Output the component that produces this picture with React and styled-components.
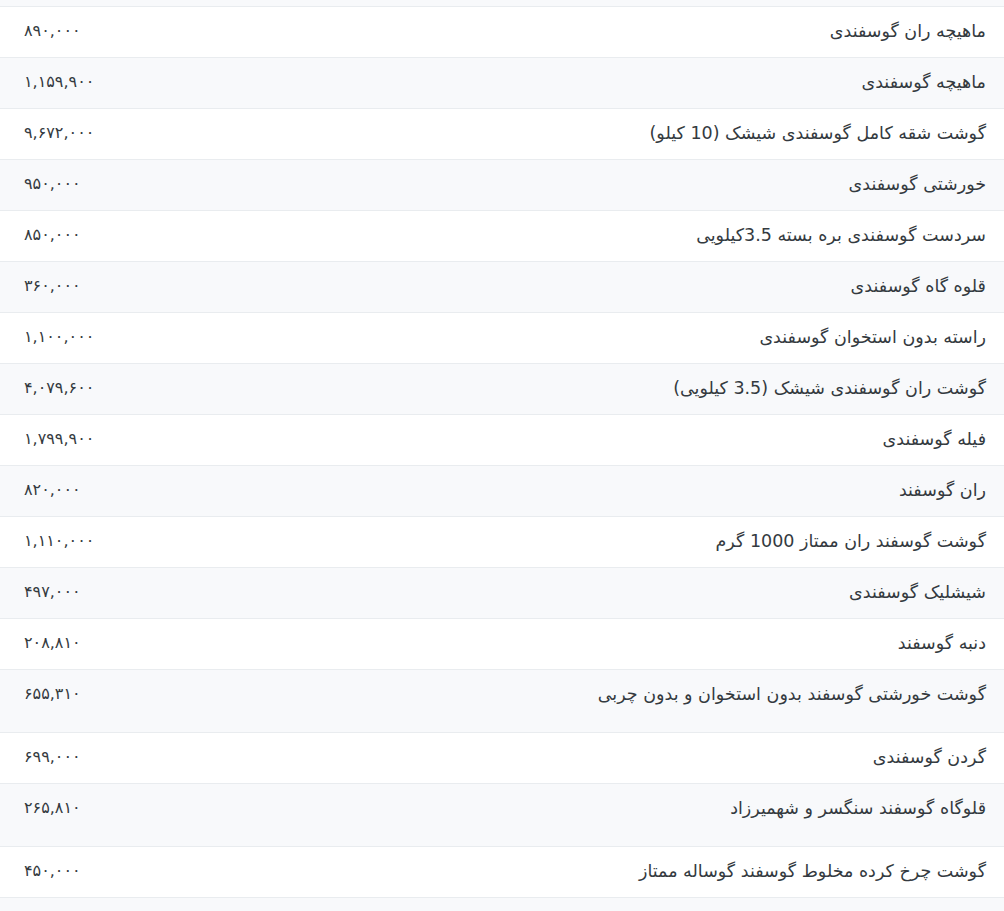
import React from "react";
import styled, { createGlobalStyle } from "styled-components";

const GlobalStyle = createGlobalStyle`
  html, body {
    margin: 0;
    padding: 0;
    background: #ffffff;
  }
  body {
    font-family: "DejaVu Sans", "Noto Sans", sans-serif;
    color: #343a40;
    overflow: hidden;
  }
`;

const Table = styled.div`
  direction: rtl;
  width: 100%;
  margin-top: -44px;
`;

const Row = styled.div`
  display: grid;
  grid-template-columns: 1fr auto;
  align-items: start;
  height: ${(p) => (p.$tall ? 62 : 50)}px;
  border-bottom: 1px solid #e9ecef;
  background: ${(p) => (p.$striped ? "#f8f9fb" : "#ffffff")};
`;

const Name = styled.div`
  padding: 11px 18px 0 0;
  font-size: 17.5px;
  line-height: 26px;
  text-align: right;
  white-space: nowrap;
`;

const Price = styled.div`
  direction: ltr;
  padding: 11px 0 0 24px;
  width: 180px;
  font-size: 16px;
  line-height: 26px;
  text-align: left;
`;

const rows = [
  { name: "", price: "" },
  { name: "ماهیچه ران گوسفندی", price: "۸۹۰,۰۰۰" },
  { name: "ماهیچه گوسفندی", price: "۱,۱۵۹,۹۰۰" },
  { name: "گوشت شقه کامل گوسفندی شیشک (10 کیلو)", price: "۹,۶۷۲,۰۰۰" },
  { name: "خورشتی گوسفندی", price: "۹۵۰,۰۰۰" },
  { name: "سردست گوسفندی بره بسته 3.5کیلویی", price: "۸۵۰,۰۰۰" },
  { name: "قلوه گاه گوسفندی", price: "۳۶۰,۰۰۰" },
  { name: "راسته بدون استخوان گوسفندی", price: "۱,۱۰۰,۰۰۰" },
  { name: "گوشت ران گوسفندی شیشک (3.5 کیلویی)", price: "۴,۰۷۹,۶۰۰" },
  { name: "فیله گوسفندی", price: "۱,۷۹۹,۹۰۰" },
  { name: "ران گوسفند", price: "۸۲۰,۰۰۰" },
  { name: "گوشت گوسفند ران ممتاز 1000 گرم", price: "۱,۱۱۰,۰۰۰" },
  { name: "شیشلیک گوسفندی", price: "۴۹۷,۰۰۰" },
  { name: "دنبه گوسفند", price: "۲۰۸,۸۱۰" },
  { name: "گوشت خورشتی گوسفند بدون استخوان و بدون چربی", price: "۶۵۵,۳۱۰", tall: true },
  { name: "گردن گوسفندی", price: "۶۹۹,۰۰۰" },
  { name: "قلوگاه گوسفند سنگسر و شهمیرزاد", price: "۲۶۵,۸۱۰", tall: true },
  { name: "گوشت چرخ کرده مخلوط گوسفند گوساله ممتاز", price: "۴۵۰,۰۰۰" },
  { name: "", price: "" },
];

export default function App() {
  return (
    <>
      <GlobalStyle />
      <Table>
        {rows.map((row, i) => (
          <Row key={i} $striped={i % 2 === 0} $tall={row.tall}>
            <Name>{row.name}</Name>
            <Price>{row.price}</Price>
          </Row>
        ))}
      </Table>
    </>
  );
}
